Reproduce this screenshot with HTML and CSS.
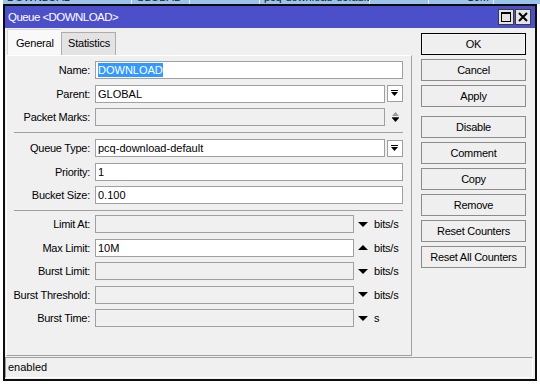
FILE: index.html
```html
<!DOCTYPE html>
<html>
<head>
  <title>Queue &lt;DOWNLOAD&gt;</title>
  <link rel="stylesheet" href="styles.css">
</head>
<body>
  <div class="list-row">
    <span class="cell c-name">DOWNLOAD</span>
    <span class="cell c-parent">GLOBAL</span>
    <span class="cell c-marks"></span>
    <span class="cell c-type">pcq-download-default</span>
    <span class="cell c-limit"></span>
    <span class="cell c-max">10M</span>
    <span class="cell c-rest"></span>
  </div>

  <div class="window">
    <div class="titlebar">
      <span class="title">Queue &lt;DOWNLOAD&gt;</span>
      <div class="title-buttons">
        <span class="tbtn">
          <svg width="10" height="10" viewBox="0 0 10 10"><rect x="0.5" y="0.5" width="9" height="9" fill="none" stroke="#000"/><rect x="0" y="0" width="10" height="2" fill="#000"/></svg>
        </span>
        <span class="tbtn">
          <svg width="10" height="10" viewBox="0 0 10 10"><path d="M1 1 L9 9 M9 1 L1 9" stroke="#000" stroke-width="2"/></svg>
        </span>
      </div>
    </div>

    <div class="main">
      <div class="left">
        <div class="tabs">
          <div class="tab active">General</div>
          <div class="tab">Statistics</div>
        </div>
        <div class="panel">
          <div class="group">
            <div class="row">
              <label>Name:</label>
              <div class="field wide"><span class="selected">DOWNLOAD</span></div>
            </div>
            <div class="row">
              <label>Parent:</label>
              <div class="field mid">GLOBAL</div>
              <span class="dropbtn">
                <svg width="8" height="7" viewBox="0 0 8 7"><rect x="0" y="0" width="7" height="1" fill="#000"/><path d="M0 2 H7 L3.5 6 Z" fill="#000"/></svg>
              </span>
            </div>
            <div class="row">
              <label>Packet Marks:</label>
              <div class="field mid disabled"></div>
              <span class="updown">
                <svg width="9" height="10" viewBox="0 0 9 10"><path d="M4.5 0 L8 4 H1 Z" fill="#9a9a9a"/><rect x="1" y="5" width="7" height="1" fill="#444"/><path d="M1 6 H8 L4.5 10 Z" fill="#000"/></svg>
              </span>
            </div>
          </div>
          <div class="sep"></div>
          <div class="group">
            <div class="row">
              <label>Queue Type:</label>
              <div class="field mid">pcq-download-default</div>
              <span class="dropbtn">
                <svg width="8" height="7" viewBox="0 0 8 7"><rect x="0" y="0" width="7" height="1" fill="#000"/><path d="M0 2 H7 L3.5 6 Z" fill="#000"/></svg>
              </span>
            </div>
            <div class="row">
              <label>Priority:</label>
              <div class="field wide">1</div>
            </div>
            <div class="row">
              <label>Bucket Size:</label>
              <div class="field wide">0.100</div>
            </div>
          </div>
          <div class="sep"></div>
          <div class="group last">
            <div class="row">
              <label>Limit At:</label>
              <div class="field short disabled"></div>
              <span class="arrow"><svg width="10" height="5" viewBox="0 0 10 5"><path d="M0 0 H10 L5 5 Z" fill="#000"/></svg></span>
              <span class="unit">bits/s</span>
            </div>
            <div class="row">
              <label>Max Limit:</label>
              <div class="field short">10M</div>
              <span class="arrow"><svg width="10" height="5" viewBox="0 0 10 5"><path d="M0 5 H10 L5 0 Z" fill="#000"/></svg></span>
              <span class="unit">bits/s</span>
            </div>
            <div class="row">
              <label>Burst Limit:</label>
              <div class="field short disabled"></div>
              <span class="arrow"><svg width="10" height="5" viewBox="0 0 10 5"><path d="M0 0 H10 L5 5 Z" fill="#000"/></svg></span>
              <span class="unit">bits/s</span>
            </div>
            <div class="row">
              <label>Burst Threshold:</label>
              <div class="field short disabled"></div>
              <span class="arrow"><svg width="10" height="5" viewBox="0 0 10 5"><path d="M0 0 H10 L5 5 Z" fill="#000"/></svg></span>
              <span class="unit">bits/s</span>
            </div>
            <div class="row">
              <label>Burst Time:</label>
              <div class="field short disabled"></div>
              <span class="arrow"><svg width="10" height="5" viewBox="0 0 10 5"><path d="M0 0 H10 L5 5 Z" fill="#000"/></svg></span>
              <span class="unit">s</span>
            </div>
          </div>
        </div>
      </div>

      <div class="actions">
        <button class="default">OK</button>
        <button>Cancel</button>
        <button>Apply</button>
        <button class="spaced">Disable</button>
        <button>Comment</button>
        <button>Copy</button>
        <button>Remove</button>
        <button>Reset Counters</button>
        <button>Reset All Counters</button>
      </div>
    </div>

    <div class="status"><span>enabled</span></div>
  </div>
</body>
</html>
```

FILE: styles.css
```css
body {
  margin: 0;
  width: 540px;
  height: 386px;
  overflow: hidden;
  background: #fff;
  font-family: "Liberation Sans", Arial, sans-serif;
  font-size: 11px;
  color: #000;
}

/* the list behind the dialog, only its bottom edge shows */
.list-row {
  display: flex;
  height: 4px;
  overflow: hidden;
  margin-left: 3px;
  background: #9cc3ea;
}

.cell {
  display: block;
  height: 14px;
  margin-top: -10px;
  padding-left: 4px;
  border-right: 1px solid #e8eef6;
  line-height: 14px;
  white-space: nowrap;
  overflow: hidden;
  color: #1a1a1a;
}

.c-name { width: 124px; }
.c-parent { width: 53px; }
.c-marks { width: 65px; }
.c-type { width: 105px; }
.c-limit { width: 54px; }
.c-max { width: 56px; text-align: right; padding-right: 4px; }
.c-rest { flex: 1; border-right: none; background: #9cc3ea; }

.window {
  box-sizing: border-box;
  width: 534px;
  height: 377px;
  margin-left: 3px;
  border: 2px solid #0d0d0d;
  background: #f0f0f0;
  display: flex;
  flex-direction: column;
}

.titlebar {
  height: 22px;
  background: #4b4fc9;
  display: flex;
  align-items: center;
  justify-content: space-between;
  padding: 0 4px 0 3px;
}

.title {
  color: #fff;
  font-size: 11.5px;
  letter-spacing: -0.55px;
}

.title-buttons {
  display: flex;
  gap: 1px;
}

.tbtn {
  box-sizing: border-box;
  width: 16px;
  height: 16px;
  background: #e4e4e4;
  border: 1px solid #3c3c3c;
  display: flex;
  align-items: center;
  justify-content: center;
}

.main {
  display: flex;
  height: 328px;
}

.left {
  width: 406px;
  margin-left: 1px;
  display: flex;
  flex-direction: column;
}

.tabs {
  height: 27px;
  display: flex;
  align-items: flex-end;
  padding-left: 1px;
}

.tab {
  box-sizing: border-box;
  height: 23px;
  width: 55px;
  padding: 4px 0 0 6px;
  background: #e3e3e3;
  border: 1px solid #adadad;
  border-bottom: none;
  letter-spacing: -0.2px;
}

.tab.active {
  height: 26px;
  width: 54px;
  padding: 7px 0 0 8px;
  background: #f9f9f9;
  border-color: #d9d9d9;
  border-right: none;
}

.panel {
  box-sizing: border-box;
  height: 301px;
  border-top: 1px solid #fff;
  border-left: 1px solid #fff;
  border-right: 1px solid #a0a0a0;
  border-bottom: 1px solid #a0a0a0;
  padding-top: 5px;
}

.group {
  display: flex;
  flex-direction: column;
  gap: 5.5px;
}

.sep {
  width: 389px;
  margin: 6px 0 6px 7px;
  border-top: 1px solid #a0a0a0;
}

.sep + .group.last {
  margin-top: -2px;
}

.row {
  height: 18px;
  display: flex;
  align-items: center;
}

.row label {
  width: 83px;
  margin-right: 5px;
  text-align: right;
  letter-spacing: -0.25px;
  white-space: nowrap;
}

.field {
  box-sizing: border-box;
  height: 18px;
  padding: 0 2px;
  background: #fff;
  border: 1px solid #a0a0a0;
  line-height: 16px;
  white-space: nowrap;
}

.field.wide { width: 308px; }
.field.mid { width: 290px; }
.field.short { width: 259px; }
.field.disabled { background: #f0f0f0; }

.selected {
  background: #3399ff;
  color: #fff;
  padding: 1px 0;
}

.dropbtn {
  box-sizing: border-box;
  width: 16px;
  height: 17px;
  margin-left: 2px;
  background: #fff;
  border: 1px solid #a0a0a0;
  display: flex;
  align-items: center;
  justify-content: center;
}

.updown {
  width: 16px;
  margin-left: 2px;
  display: flex;
  justify-content: center;
}

.arrow {
  width: 18px;
  display: flex;
  justify-content: center;
}

.unit {
  margin-left: 2px;
  letter-spacing: -0.2px;
}

.actions {
  width: 105px;
  margin-left: 9px;
  padding-top: 5px;
  display: flex;
  flex-direction: column;
  gap: 4px;
}

.actions button {
  box-sizing: border-box;
  height: 22px;
  margin: 0;
  padding: 0;
  background: #efefef;
  border: 1px solid #8c8c8c;
  font-family: "Liberation Sans", Arial, sans-serif;
  font-size: 11px;
  letter-spacing: -0.25px;
  color: #000;
}

.actions button.default {
  border: 1px solid #000;
  box-shadow: inset 0 0 0 1px #f7f7f7;
}

.actions button.spaced {
  margin-top: 5px;
}

.status {
  box-sizing: border-box;
  height: 21px;
  width: 528px;
  margin-top: 1px;
  border-top: 1px solid #a0a0a0;
  border-left: 1px solid #a0a0a0;
  border-right: 1px solid #fff;
  border-bottom: 1px solid #fff;
  padding-left: 2px;
  line-height: 19px;
}
```
